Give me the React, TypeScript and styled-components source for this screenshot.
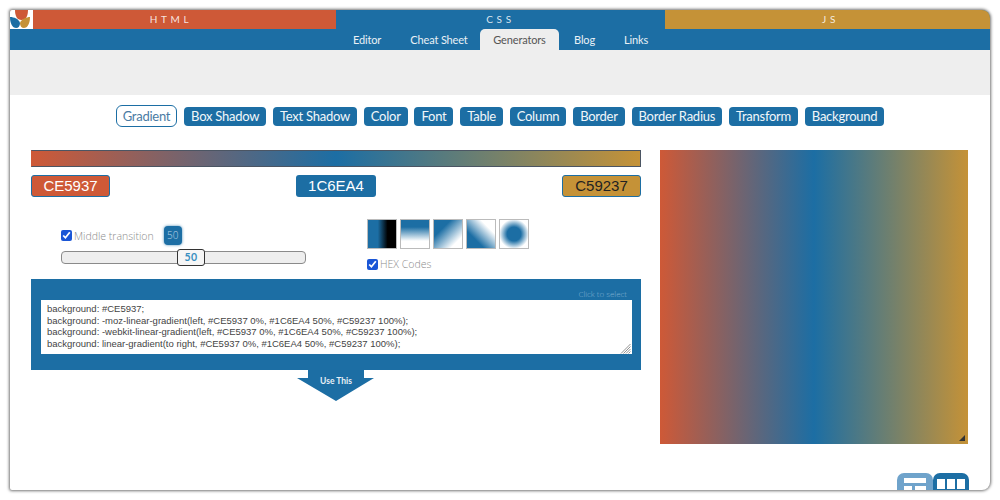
import React from "react";
import styled, { createGlobalStyle } from "styled-components";

const C1 = "#CE5937";
const C2 = "#1C6EA4";
const C3 = "#C59237";

const Global = createGlobalStyle`
  html, body { margin: 0; padding: 0; background: #fff; width: 1000px; height: 500px; overflow: hidden; }
  * { box-sizing: border-box; }
`;

const Page = styled.div`
  width: 1000px;
  height: 500px;
  padding: 10px;
  font-family: Lato, sans-serif;
`;
const Win = styled.div`
  position: relative;
  width: 980px;
  height: 480px;
  background: #fff;
  border-radius: 2px 8px 8px 2px;
  overflow: hidden;
  box-shadow: 0 0 3px 1px rgba(0,0,0,.55);
`;
const TopBar = styled.div`
  display: flex;
  height: 19px;
  background: ${C2};
`;
const Logo = styled.svg`
  position: absolute;
  left: 0;
  top: 0;
  width: 23px;
  height: 19px;
  display: block;
`;
const TopTab = styled.div<{ $bg: string; $w: number; $pl?: number; $pr?: number }>`
  width: ${p => p.$w}px;
  flex: none;
  background: ${p => p.$bg};
  color: rgba(255,255,255,.85);
  font-size: 10px;
  line-height: 19px;
  letter-spacing: 3.6px;
  text-align: center;
  padding: 0 ${p => p.$pr ?? 0}px 0 ${p => p.$pl ?? 0}px;
`;
const Nav = styled.nav`
  display: flex;
  justify-content: center;
  height: 21px;
  background: ${C2};
  padding-right: 2px;
`;
const NavItem = styled.div<{ $active?: boolean; $w: number }>`
  width: ${p => p.$w}px;
  text-align: center;
  font-size: 11px;
  letter-spacing: -.15px;
  line-height: 22px;
  color: ${p => (p.$active ? "#555" : "#e9f1f6")};
  background: ${p => (p.$active ? "#eee" : "transparent")};
  border-radius: 5px 5px 0 0;
`;
const Band = styled.div`
  height: 45px;
  background: #eee;
`;
const Tools = styled.div`
  display: flex;
  justify-content: center;
  align-items: center;
  gap: 6.8px;
  height: 42px;
`;
const Tool = styled.div<{ $active?: boolean }>`
  height: ${p => (p.$active ? 22 : 19)}px;
  padding: 0 ${p => (p.$active ? 6 : 7)}px;
  display: flex;
  align-items: center;
  border-radius: ${p => (p.$active ? 6 : 4)}px;
  font-size: 13px;
  letter-spacing: -.25px;
  background: ${p => (p.$active ? "#fff" : C2)};
  color: ${p => (p.$active ? "#4a7ba3" : "#f2f7fa")};
  border: ${p => (p.$active ? `1.5px solid ${C2}` : "none")};
`;
const Main = styled.div`
  display: grid;
  grid-template-columns: 610px 308px;
  column-gap: 19px;
  padding: 13px 0 0 21px;
`;
const Left = styled.div`
  display: flex;
  flex-direction: column;
`;
const Bar = styled.div`
  height: 17px;
  background: linear-gradient(to right, ${C1} 0%, ${C2} 50%, ${C3} 100%);
  border: 1px solid #4b5563;
  border-left-color: ${C1};
`;
const Swatches = styled.div`
  display: flex;
  justify-content: space-between;
  margin-top: 8px;
`;
const ColorBtn = styled.div<{ $bg: string; $fg: string; $edge?: boolean }>`
  width: ${p => (p.$edge ? 79 : 80)}px;
  height: 22px;
  border-radius: 3px;
  background: ${p => p.$bg};
  color: ${p => p.$fg};
  border: ${p => (p.$edge ? `1px solid ${C2}` : "none")};
  font-family: "Liberation Sans", Arial, sans-serif;
  font-size: 15px;
  line-height: ${p => (p.$edge ? 20 : 22)}px;
  text-align: center;
`;
const Controls = styled.div`
  display: grid;
  grid-template-columns: 336px 1fr;
  height: 82px;
  padding-top: 22px;
`;
const SliderCol = styled.div`
  padding: 7px 0 0 30px;
`;
const CheckRow = styled.label`
  display: flex;
  align-items: center;
  gap: 2px;
  font-size: 10.5px;
  color: #8c8c8c;
  font-family: "Open Sans", sans-serif;
  font-weight: 300;
`;
const Check = styled.input`
  width: 11px;
  height: 11px;
  margin: 0;
  accent-color: #1a56d6;
`;
const Bubble = styled.span`
  margin-left: 8px;
  width: 18px;
  height: 19px;
  border-radius: 4px;
  background: ${C2};
  color: #b9d3e6;
  font-size: 10px;
  text-align: center;
  line-height: 19px;
  box-shadow: 0 0 3px rgba(28,110,164,.8);
`;
const Track = styled.div`
  position: relative;
  margin-top: 6px;
  width: 245px;
  height: 13px;
  background: #eee;
  border: 1px solid #8a8a8a;
  border-radius: 4px;
`;
const Handle = styled.div`
  position: absolute;
  left: 115px;
  top: -3px;
  width: 28px;
  height: 17px;
  background: #f6f6f6;
  border: 1.5px solid #333;
  border-radius: 3px;
  color: #3a8fc0;
  font-size: 10.5px;
  font-weight: 700;
  text-align: center;
  line-height: 14px;
  letter-spacing: .5px;
`;
const GradCol = styled.div`
  display: flex;
  flex-direction: column;
`;
const Thumbs = styled.div`
  display: flex;
  gap: 3px;
`;
const Thumb = styled.div<{ $bg: string }>`
  width: 30px;
  height: 30px;
  border: 1px solid #bbb;
  background: ${p => p.$bg};
`;
const HexRow = styled(CheckRow)`
  margin-top: 8px;
`;
const CodePanel = styled.div`
  position: relative;
  height: 91px;
  background: ${C2};
  padding: 21px 9px 0 10px;
`;
const Hint = styled.div`
  position: absolute;
  top: 9px;
  right: 14px;
  font-family: "Open Sans", sans-serif;
  font-weight: 300;
  font-size: 8px;
  color: #7fb0d0;
`;
const Code = styled.textarea`
  display: block;
  width: 100%;
  height: 54px;
  border: none;
  outline: none;
  padding: 3px 6px;
  margin: 0;
  font-family: "Liberation Sans", Arial, sans-serif;
  font-size: 9.5px;
  line-height: 11.6px;
  color: #444;
  background: #fff;
  overflow: hidden;
  white-space: pre;
  resize: none;
`;
const CodeGrip = styled.svg`
  position: absolute;
  right: 10px;
  top: 64px;
  width: 11px;
  height: 11px;
`;
const UseThis = styled.div`
  position: relative;
  align-self: center;
  width: 78px;
  height: 31px;
`;
const UseShape = styled.svg`
  position: absolute;
  inset: 0;
  width: 78px;
  height: 31px;
`;
const UseLabel = styled.div`
  position: relative;
  text-align: center;
  font-size: 8.5px;
  font-weight: 700;
  color: #e8f0f6;
  line-height: 22px;
`;
const Preview = styled.div`
  position: relative;
  height: 294px;
  background: linear-gradient(to right, ${C1} 0%, ${C2} 50%, ${C3} 100%);
`;
const Grip = styled.svg`
  position: absolute;
  right: 3px;
  bottom: 3px;
  width: 6px;
  height: 6px;
`;
const Layouts = styled.div`
  position: absolute;
  right: 21px;
  bottom: -1px;
  display: flex;
`;
const LayoutIcon = styled.svg`
  display: block;
  width: 36px;
  height: 18px;
`;

const tools = ["Box Shadow", "Text Shadow", "Color", "Font", "Table", "Column", "Border", "Border Radius", "Transform", "Background"];
const nav: [string, number, boolean?][] = [["Editor", 62], ["Cheat Sheet", 82], ["Generators", 79, true], ["Blog", 51], ["Links", 52]];
const code = `background: #CE5937;
background: -moz-linear-gradient(left, #CE5937 0%, #1C6EA4 50%, #C59237 100%);
background: -webkit-linear-gradient(left, #CE5937 0%, #1C6EA4 50%, #C59237 100%);
background: linear-gradient(to right, #CE5937 0%, #1C6EA4 50%, #C59237 100%);`;
const thumbs = [
  `linear-gradient(to right, ${C2} 35%, #000 70%)`,
  `linear-gradient(to bottom, ${C2} 25%, #fff 75%)`,
  `linear-gradient(135deg, ${C2} 30%, #fff 80%)`,
  `linear-gradient(45deg, ${C2} 30%, #fff 75%)`,
  `radial-gradient(circle, ${C2} 35%, #fff 75%)`,
];

export default function App() {
  return (
    <Page>
      <Global />
      <Win>
        <TopBar>
          <TopTab $bg={C1} $w={326} $pr={4}>HTML</TopTab>
          <TopTab $bg={C2} $w={329}>CSS</TopTab>
          <TopTab $bg={C3} $w={325} $pl={6}>JS</TopTab>
        </TopBar>
        <Logo viewBox="0 0 23 19">
          <rect width="23" height="19" fill="#fff" />
          <path d="M5 0h13c0 6-2 10-6.500 10S5 6 5 0z" fill={C1} />
          <path d="M0 7c4 0 9 2 10 6 0 3-1.500 5-4 5S0 15 0 7z" fill={C2} />
          <path d="M20 7c-3 0-9 2-10 6 0 3 1.500 5 4 5s6-3 6-11z" fill={C3} />
        </Logo>
        <Nav>
          {nav.map(([n, w, a]) => (
            <NavItem key={n} $w={w} $active={a}>{n}</NavItem>
          ))}
        </Nav>
        <Band />
        <Tools>
          <Tool $active>Gradient</Tool>
          {tools.map(t => <Tool key={t}>{t}</Tool>)}
        </Tools>
        <Main>
          <Left>
            <Bar />
            <Swatches>
              <ColorBtn $bg={C1} $fg="#fff" $edge>CE5937</ColorBtn>
              <ColorBtn $bg={C2} $fg="#fff">1C6EA4</ColorBtn>
              <ColorBtn $bg={C3} $fg="#222" $edge>C59237</ColorBtn>
            </Swatches>
            <Controls>
              <SliderCol>
                <CheckRow>
                  <Check type="checkbox" defaultChecked />
                  Middle transition
                  <Bubble>50</Bubble>
                </CheckRow>
                <Track><Handle>50</Handle></Track>
              </SliderCol>
              <GradCol>
                <Thumbs>
                  {thumbs.map(t => <Thumb key={t} $bg={t} />)}
                </Thumbs>
                <HexRow>
                  <Check type="checkbox" defaultChecked />
                  HEX Codes
                </HexRow>
              </GradCol>
            </Controls>
            <CodePanel>
              <Hint>Click to select</Hint>
              <Code readOnly value={code} />
              <CodeGrip viewBox="0 0 11 11">
                <path d="M10.500 1L1 10.500M10.500 3.500L3.500 10.500M10.500 6L6 10.500M10.500 8.500L8.500 10.500" stroke="#777" strokeWidth=".8" fill="none" />
              </CodeGrip>
            </CodePanel>
            <UseThis>
              <UseShape viewBox="0 0 78 31">
                <path d="M11 0h56v8h10L39 31 0 8h11z" fill={C2} />
              </UseShape>
              <UseLabel>Use This</UseLabel>
            </UseThis>
          </Left>
          <Preview>
            <Grip viewBox="0 0 6 6"><path d="M6 0v6H0z" fill="#333" /></Grip>
          </Preview>
        </Main>
        <Layouts>
          <LayoutIcon viewBox="0 0 36 18">
            <path d="M0 18V7a7 7 0 0 1 7-7h22a7 7 0 0 1 7 7v11H0z" fill="#6fa3cb" />
            <rect x="7" y="5" width="22" height="5" fill="#fff" />
            <rect x="7" y="13" width="8" height="5" fill="#fff" />
            <rect x="18" y="13" width="11" height="5" fill="#fff" />
          </LayoutIcon>
          <LayoutIcon viewBox="0 0 36 18">
            <path d="M0 18V7a7 7 0 0 1 7-7h22a7 7 0 0 1 7 7v11H0z" fill={C2} />
            <rect x="4" y="6" width="8" height="10" fill="#fff" />
            <rect x="14" y="6" width="8" height="10" fill="#fff" />
            <rect x="24" y="6" width="8" height="10" fill="#fff" />
          </LayoutIcon>
        </Layouts>
      </Win>
    </Page>
  );
}
